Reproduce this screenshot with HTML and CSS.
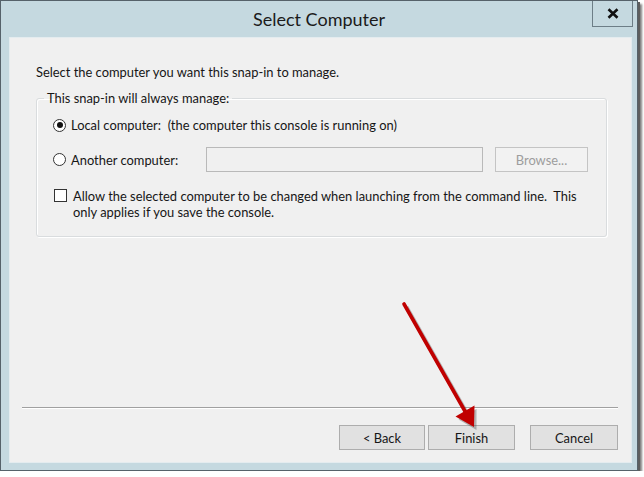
FILE: index.html
```html
<!DOCTYPE html>
<html>
<head>
<meta charset="utf-8">
<link rel="stylesheet" href="styles.css">
</head>
<body>
<div class="window">
  <div class="titlebar">
    <div class="title">Select Computer</div>
    <div class="close">
      <svg width="12" height="11" viewBox="0 0 12 11"><path d="M1.5 1.2 L10.5 9.8 M10.5 1.2 L1.5 9.8" stroke="#111" stroke-width="2.6" stroke-linecap="butt"/></svg>
    </div>
  </div>
  <div class="client">
    <p class="intro">Select the computer you want this snap-in to manage.</p>
    <fieldset class="group">
      <legend>This snap-in will always manage:</legend>
      <div class="row row-local">
        <span class="radio checked"></span>
        <span class="label">Local computer:&nbsp; (the computer this console is running on)</span>
      </div>
      <div class="row row-another">
        <div class="radio-col">
          <span class="radio"></span>
          <span class="label">Another computer:</span>
        </div>
        <div class="textbox"></div>
        <div class="btn btn-disabled browse">Browse...</div>
      </div>
      <div class="row row-check">
        <span class="checkbox"></span>
        <span class="check-text">Allow the selected computer to be changed when launching from the command line.&nbsp; This<br>only applies if you save the console.</span>
      </div>
    </fieldset>
    <div class="separator"></div>
    <div class="buttons">
      <div class="btn back">&lt; Back</div>
      <div class="btn finish">Finish</div>
      <div class="btn cancel">Cancel</div>
    </div>
  </div>
  <svg class="arrow" width="638" height="471" viewBox="0 0 638 471">
    <g transform="translate(2.5,3)" opacity="0.35" fill="#444" stroke="#444">
      <line x1="404" y1="304" x2="466" y2="413" stroke-width="4"/>
      <polygon points="474,427 474,406 456,416.5" stroke="none"/>
    </g>
    <g fill="#c00000" stroke="#c00000">
      <line x1="404" y1="304" x2="466" y2="413" stroke-width="3.6" stroke-linecap="round"/>
      <polygon points="474,427 474.5,405.5 455.5,416.5" stroke="none"/>
    </g>
  </svg>
</div>
</body>
</html>
```

FILE: styles.css
```css
* { box-sizing: border-box; }

html, body {
  margin: 0;
  padding: 0;
  background: #ffffff;
}

body {
  font-family: Lato, "Open Sans", sans-serif;
  font-size: 12.9px;
  color: #161616;
}

.window {
  position: relative;
  width: 638px;
  height: 471px;
  background: #c5d9e0;
  border: 1px solid #56626a;
  box-shadow: 2px 2px 0 #5e5e5e, 4px 4px 2px rgba(0, 0, 0, 0.5);
  display: flex;
  flex-direction: column;
}

.titlebar {
  height: 36px;
  display: grid;
  grid-template-columns: 1fr auto 1fr;
  align-items: start;
}

.title {
  grid-column: 2;
  font-size: 18px;
  line-height: 36px;
  color: #1b1b1b;
}

.close {
  grid-column: 3;
  justify-self: end;
  width: 41px;
  height: 26px;
  margin-right: 4px;
  border: 1px solid #6d7e87;
  border-top: none;
  display: flex;
  align-items: center;
  justify-content: center;
  padding-bottom: 1px;
}

.client {
  flex: 1;
  margin: 0 5px 7px 8px;
  background: #f0f0f0;
  border: 1px solid #e4ecef;
  padding: 26px 13px 12px 12px;
  display: flex;
  flex-direction: column;
}

.intro {
  margin: 0 0 0 14px;
  line-height: 16px;
}

.group {
  margin: 10px 11px 0 14px;
  padding: 9px 16px 16px 16px;
  border: 1px solid #d9dcde;
  border-radius: 3px;
  box-shadow: inset 1px 1px 0 #ffffff, 1px 1px 0 #ffffff;
  min-width: 0;
}

.group legend {
  margin-left: -9px;
  padding: 0 3px;
  line-height: 16px;
}

.row {
  display: flex;
  align-items: center;
}

.row-local {
  height: 20px;
}

.row-another {
  height: 25px;
  margin-top: 12px;
}

.radio-col {
  width: 153px;
  display: flex;
  align-items: center;
}

.radio {
  width: 13px;
  height: 13px;
  border-radius: 50%;
  border: 1px solid #333333;
  background: #ffffff;
  display: flex;
  align-items: center;
  justify-content: center;
  flex: none;
}

.radio.checked::after {
  content: "";
  width: 6px;
  height: 6px;
  border-radius: 50%;
  background: #111111;
}

.label {
  margin-left: 5px;
  line-height: 16px;
}

.textbox {
  width: 277px;
  height: 25px;
  border: 1px solid #b9b9b9;
  background: #f0f0f0;
}

.btn {
  height: 25px;
  border: 1px solid #adadad;
  background: #e1e1e1;
  display: flex;
  align-items: center;
  justify-content: center;
  color: #161616;
}

.btn-disabled {
  border-color: #c4c4c4;
  background: #f2f2f2;
  color: #9d9d9d;
}

.browse {
  width: 93px;
  margin-left: 12px;
}

.row-check {
  margin-top: 16px;
  align-items: flex-start;
}

.checkbox {
  width: 13px;
  height: 13px;
  margin: 1px 0 0 1px;
  border: 1px solid #333333;
  background: #ffffff;
  flex: none;
}

.check-text {
  margin-left: 6px;
  line-height: 16px;
}

.separator {
  margin-top: auto;
  height: 2px;
  border-top: 1px solid #a0a0a0;
  border-bottom: 1px solid #ffffff;
}

.buttons {
  margin-top: 16px;
  display: flex;
  justify-content: flex-end;
}

.back {
  width: 86px;
}

.finish {
  width: 87px;
  margin-left: 3px;
}

.cancel {
  width: 88px;
  margin-left: 15px;
}

.arrow {
  position: absolute;
  left: -1px;
  top: -1px;
  pointer-events: none;
}
```
